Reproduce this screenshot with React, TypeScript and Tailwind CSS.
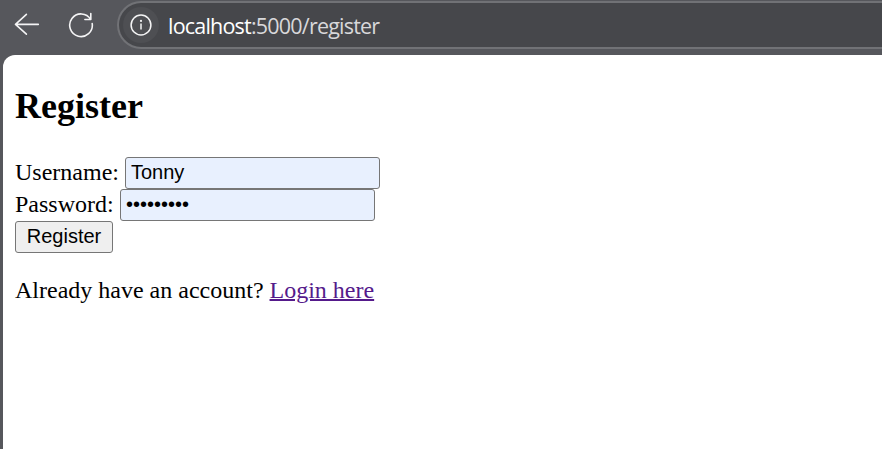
import { useState } from 'react';

function BackIcon() {
  return (
    <svg width="26" height="24" viewBox="0 0 26 24" fill="none" stroke="#f4f4f5" strokeWidth="1.6" strokeLinecap="round" strokeLinejoin="round">
      <path d="M24.3 12.4H1.5M12.4 2.4L1.5 12.4L12.4 22.2" />
    </svg>
  );
}

function ReloadIcon() {
  return (
    <svg width="26" height="26" viewBox="0 0 26 26" fill="none" stroke="#f4f4f5" strokeWidth="1.6" strokeLinecap="round" strokeLinejoin="round">
      <path d="M24.2 11.6A11.3 11.3 0 1 1 22.7 7.4M22.8 1.6V7.5H16.9" />
    </svg>
  );
}

function InfoIcon() {
  return (
    <svg width="22" height="22" viewBox="0 0 22 22" fill="none" stroke="#f4f4f5" strokeWidth="1.5">
      <circle cx="11" cy="11" r="9.9" />
      <path d="M11 9.5V15.5" />
      <circle cx="11" cy="6.9" r="1.1" fill="#f4f4f5" stroke="none" />
    </svg>
  );
}

const field =
  'block h-8 w-[255px] rounded-[3px] border border-[#767676] bg-[#e8f0fe] pr-[6px] pb-[2px] pl-[5px] text-black outline-none';

export default function App() {
  const [username, setUsername] = useState('Tonny');
  const [password, setPassword] = useState('tonny1234');

  return (
    <div className="flex h-[449px] w-[882px] flex-col overflow-hidden bg-[#56575c]">
      <header className="flex h-[55px] shrink-0 pl-[14px]">
        <button aria-label="Back" className="mt-[12px] h-6 w-[26px]"><BackIcon /></button>
        <button aria-label="Reload" className="mt-[12px] ml-[28px] h-[26px] w-[26px]"><ReloadIcon /></button>
        <div className="mt-px ml-[23px] flex h-12 flex-1 items-center rounded-l-full border-2 border-r-0 border-[#717276] bg-[#46474b] pl-[4px]">
          <span className="flex h-9 w-9 items-center justify-center rounded-full bg-[#4e4f53]"><InfoIcon /></span>
          <span className="mt-[2px] ml-[9px] font-['Open_Sans','Noto_Sans',sans-serif] text-[21.5px] leading-[30px] tracking-[-0.79px] text-[#d8d8da]">
            <span className="text-white">localhost</span>:5000/register
          </span>
        </div>
      </header>
      <main className="ml-[3px] flex-1 rounded-tl-[12px] bg-white pl-[12px] font-['Liberation_Serif',serif] text-[24px] leading-[27px] text-black">
        <h2 className="pt-[31px] text-[36px] leading-[41px] font-bold">Register</h2>
        <form className="mt-[30px]" onSubmit={(e) => e.preventDefault()}>
          <div className="flex h-8 items-center">
            <label htmlFor="username" className="w-[110px] pb-[2px]">Username:</label>
            <input id="username" value={username} onChange={(e) => setUsername(e.target.value)} className={`${field} font-['Liberation_Sans',sans-serif] text-[20px]`} />
          </div>
          <div className="flex h-8 items-center">
            <label htmlFor="password" className="w-[105px] pb-[2px]">Password:</label>
            <input id="password" type="password" value={password} onChange={(e) => setPassword(e.target.value)} className={`${field} font-['Liberation_Sans',sans-serif] text-[20px]`} />
          </div>
          <button className="block h-8 w-[98px] rounded-[3px] border border-[#767676] bg-[#efefef] pb-[2px] font-['Liberation_Sans',sans-serif] text-[20px] leading-[23px]">Register</button>
        </form>
        <p className="mt-[24px]">
          Already have an account?{' '}
          <a href="#login" className="text-[#551a8b] underline decoration-2">Login here</a>
        </p>
      </main>
    </div>
  );
}
